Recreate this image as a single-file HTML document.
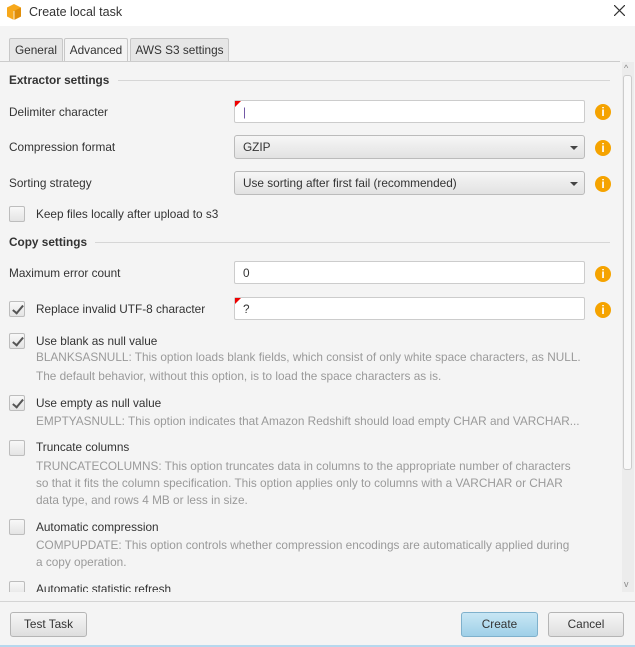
<!DOCTYPE html><html><head><style>
body{margin:0;width:635px;height:647px;overflow:hidden;background:#f4f4f4;font-family:"Liberation Sans",sans-serif;font-size:11.8px;color:#333;position:relative}
.a{position:absolute;white-space:nowrap}
.title{left:0;top:0;width:635px;height:26px;background:#fff}
.tab{position:absolute;top:38px;height:22px;border:1px solid #c8c8c8;border-bottom:none;background:#e6e6e6;line-height:22px;text-align:center;border-radius:2px 2px 0 0}
.h{font-weight:bold;color:#333}
.line{position:absolute;height:1px;background:#d6d6d6}
.inp{position:absolute;left:234px;height:23px;background:#fff;border:1px solid #ccc;border-radius:2px;line-height:23px;padding-left:8px;box-sizing:border-box;width:351px}
.inp.r::before{content:"";position:absolute;left:0;top:0;border-top:6px solid #e00;border-right:6px solid transparent}
.sel{position:absolute;left:234px;width:351px;height:24px;box-sizing:border-box;border:1px solid #bbb;border-radius:3px;background:linear-gradient(#f6f6f6,#e2e2e2);line-height:22px;padding-left:8px}
.sel::after{content:"";position:absolute;right:6px;top:10px;border-top:4px solid #444;border-left:4px solid transparent;border-right:4px solid transparent}
.info{position:absolute;left:595px;width:16px;height:16px;border-radius:50%;background:#f5a300;color:#fff;font-weight:bold;font-size:12px;text-align:center;line-height:16px}
.cb{position:absolute;left:9px;width:16px;height:16px;box-sizing:border-box;border:1px solid #bdbdbd;border-radius:2px;background:linear-gradient(#f8f8f8,#e4e4e4)}
.cb.c::after{content:"";position:absolute;left:5px;top:1px;width:4px;height:9px;border-right:2px solid #555;border-bottom:2px solid #555;transform:rotate(40deg)}
.d{color:#9a9a9a}
.btn{position:absolute;top:612px;height:25px;box-sizing:border-box;border:1px solid #b5b5b5;border-radius:3px;background:linear-gradient(#f6f6f6,#dedede);text-align:center;line-height:23px}
</style></head><body>
<div class="a title"></div>
<svg class="a" style="left:6px;top:3px" width="16" height="18" viewBox="0 0 16 18"><path d="M8 1L15 4.5V13.5L8 17L1 13.5V4.5Z" fill="#f7a81b"/><path d="M8 8L15 4.5V13.5L8 17Z" fill="#e08e0b"/><path d="M8 8V17" stroke="#fff" stroke-width="0.8"/></svg>
<div class="a" style="left:29px;top:5px;font-size:12.5px">Create local task</div>
<svg class="a" style="left:614px;top:5px" width="11" height="11"><path d="M0 0L11 11M11 0L0 11" stroke="#333" stroke-width="1.2"/></svg>
<div class="tab" style="left:9px;width:52px">General</div>
<div class="tab" style="left:64px;width:62px;background:#f4f4f4;height:23px">Advanced</div>
<div class="tab" style="left:130px;width:97px">AWS S3 settings</div>
<div class="line" style="left:0;top:61px;width:620px;background:#ccc"></div>
<div class="a" style="left:622px;top:62px;width:12px;height:530px;background:#ececec"></div>
<div class="a" style="left:623px;top:75px;width:9px;height:395px;background:#f8f8f8;border:1px solid #ccc;border-radius:3px;box-sizing:border-box"></div>
<div class="a" style="left:624px;top:63px;font-size:9px;color:#888">^</div>
<div class="a" style="left:624px;top:579px;font-size:9px;color:#888">v</div>

<div class="a h" style="left:9px;top:73px">Extractor settings</div><div class="line" style="left:118px;top:80px;width:492px"></div>
<div class="a" style="left:9px;top:105px">Delimiter character</div>
<div class="inp r" style="top:100px"><span style="color:#6a4fa0">|</span></div><div class="info" style="top:104px">i</div>
<div class="a" style="left:9px;top:140px">Compression format</div>
<div class="sel" style="top:135px">GZIP</div><div class="info" style="top:140px">i</div>
<div class="a" style="left:9px;top:176px">Sorting strategy</div>
<div class="sel" style="top:171px">Use sorting after first fail (recommended)</div><div class="info" style="top:176px">i</div>
<div class="cb" style="top:206px"></div><div class="a" style="left:36px;top:207px">Keep files locally after upload to s3</div>

<div class="a h" style="left:9px;top:235px">Copy settings</div><div class="line" style="left:95px;top:242px;width:515px"></div>
<div class="a" style="left:9px;top:266px">Maximum error count</div>
<div class="inp" style="top:261px">0</div><div class="info" style="top:266px">i</div>
<div class="cb c" style="top:301px"></div><div class="a" style="left:36px;top:302px">Replace invalid UTF-8 character</div>
<div class="inp r" style="top:297px">?</div><div class="info" style="top:302px">i</div>
<div class="cb c" style="top:333px"></div><div class="a" style="left:36px;top:334px">Use blank as null value</div>
<div class="a d" style="left:36px;top:350px">BLANKSASNULL: This option loads blank fields, which consist of only white space characters, as NULL.</div>
<div class="a d" style="left:36px;top:369px">The default behavior, without this option, is to load the space characters as is.</div>
<div class="cb c" style="top:395px"></div><div class="a" style="left:36px;top:396px">Use empty as null value</div>
<div class="a d" style="left:36px;top:414px">EMPTYASNULL: This option indicates that Amazon Redshift should load empty CHAR and VARCHAR...</div>
<div class="cb" style="top:440px"></div><div class="a" style="left:36px;top:440px">Truncate columns</div>
<div class="a d" style="left:36px;top:459px">TRUNCATECOLUMNS: This option truncates data in columns to the appropriate number of characters</div>
<div class="a d" style="left:36px;top:476px">so that it fits the column specification. This option applies only to columns with a VARCHAR or CHAR</div>
<div class="a d" style="left:36px;top:493px">data type, and rows 4 MB or less in size.</div>
<div class="cb" style="top:519px"></div><div class="a" style="left:36px;top:520px">Automatic compression</div>
<div class="a d" style="left:36px;top:538px">COMPUPDATE: This option controls whether compression encodings are automatically applied during</div>
<div class="a d" style="left:36px;top:555px">a copy operation.</div>
<div style="position:absolute;left:0;top:578px;width:620px;height:14px;overflow:hidden">
<div class="cb" style="top:3px"></div><div class="a" style="left:36px;top:4px">Automatic statistic refresh</div></div>
<div class="line" style="left:0;top:601px;width:635px;background:#d4d4d4"></div>
<div class="btn" style="left:10px;width:77px">Test Task</div>
<div class="btn" style="left:461px;width:77px;background:linear-gradient(#c8e6f4,#9fd0e8);border-color:#7fb1cc">Create</div>
<div class="btn" style="left:548px;width:76px">Cancel</div>
<div class="a" style="left:0;top:645px;width:635px;height:2px;background:#b6d8ee"></div>
</body></html>
